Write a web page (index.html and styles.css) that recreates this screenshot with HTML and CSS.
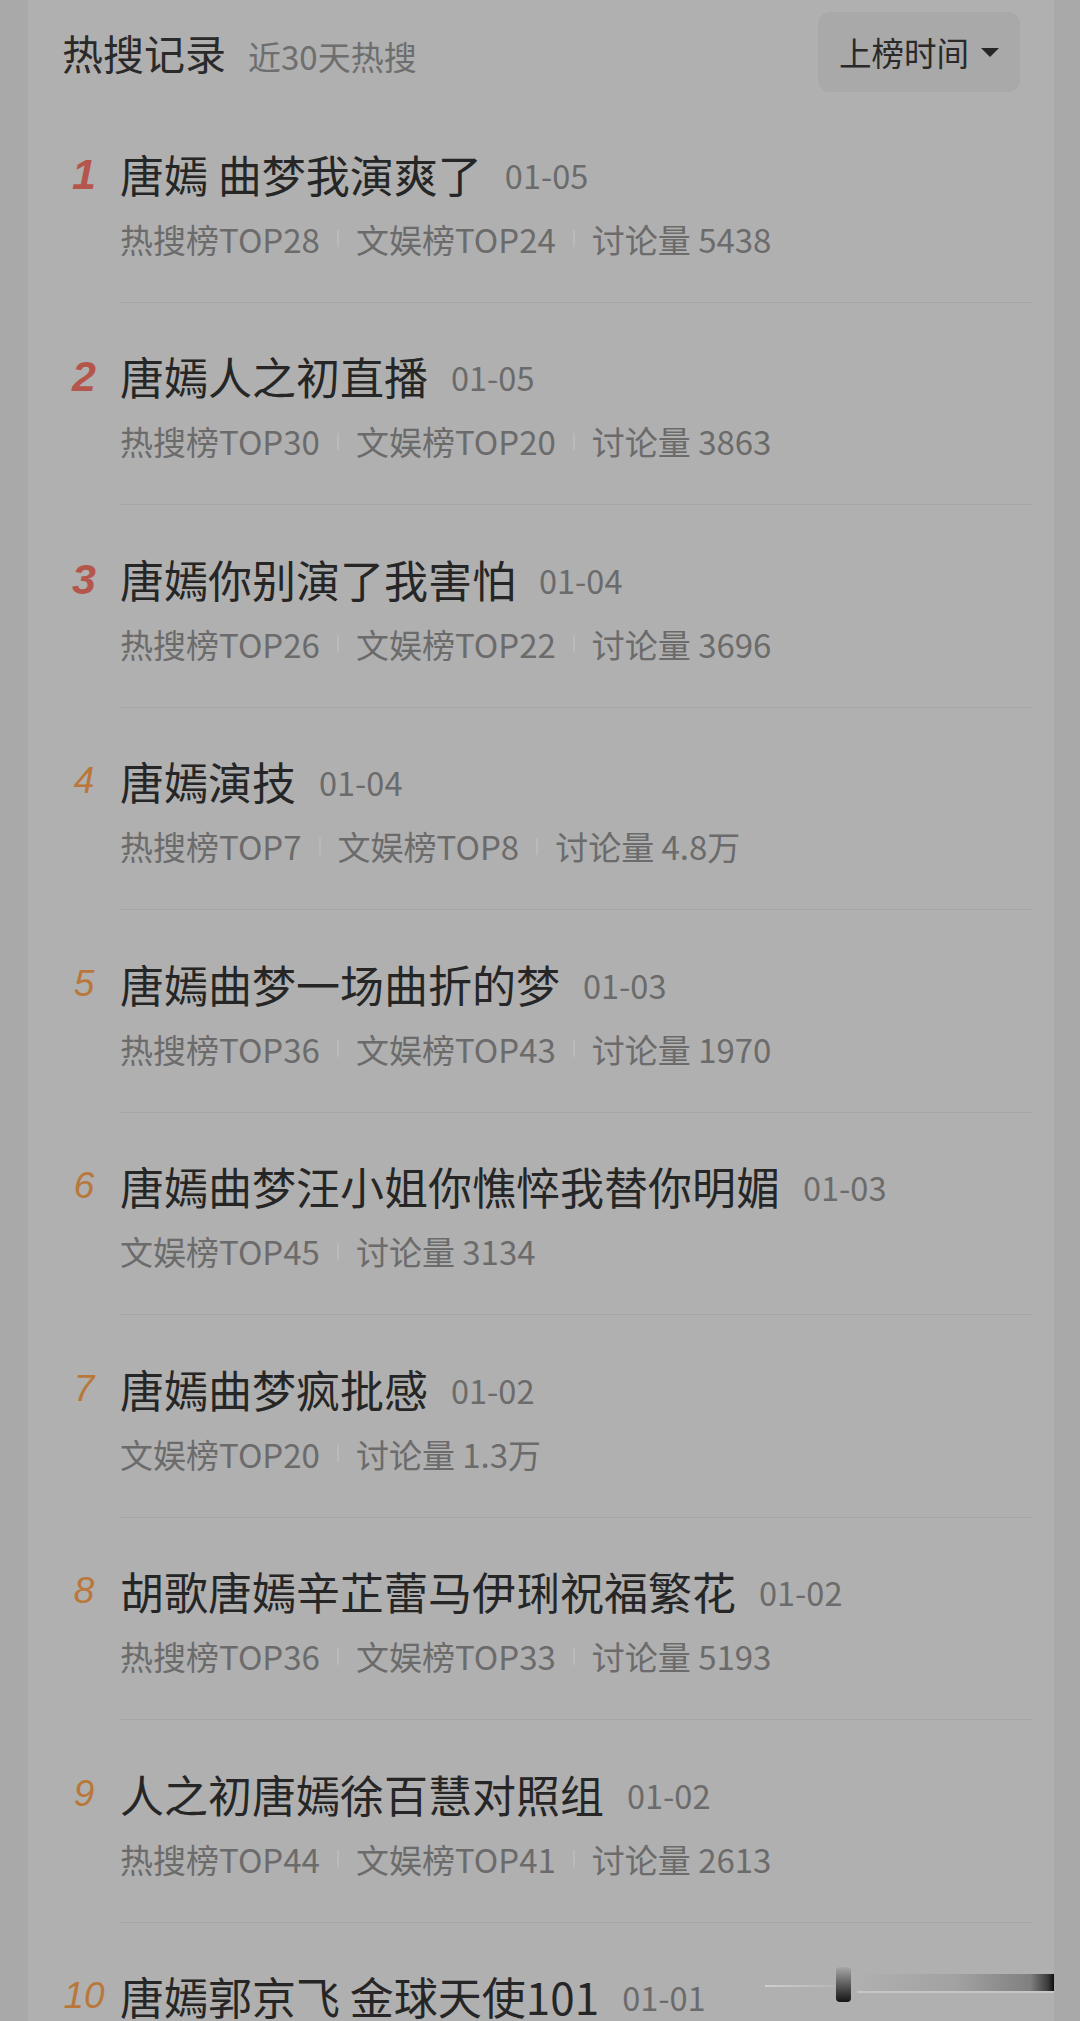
FILE: index.html
```html
<!DOCTYPE html>
<html lang="zh-CN">
<head>
<meta charset="utf-8">
<title>热搜记录</title>
<link rel="stylesheet" href="styles.css">
</head>
<body>
<div class="panel">
  <header class="head">
    <div class="head-left">
      <span class="head-title">热搜记录</span>
      <span class="head-sub">近30天热搜</span>
    </div>
    <button class="sort-btn">上榜时间<span class="caret"></span></button>
  </header>
  <ul class="list">
    <li class="item">
      <span class="rank top">1</span>
      <div class="body">
        <div class="title-line"><span class="title">唐嫣 曲梦我演爽了</span><span class="date">01-05</span></div>
        <div class="meta"><span>热搜榜TOP28</span><i class="sep"></i><span>文娱榜TOP24</span><i class="sep"></i><span>讨论量 5438</span></div>
      </div>
    </li>
    <li class="item">
      <span class="rank top">2</span>
      <div class="body">
        <div class="title-line"><span class="title">唐嫣人之初直播</span><span class="date">01-05</span></div>
        <div class="meta"><span>热搜榜TOP30</span><i class="sep"></i><span>文娱榜TOP20</span><i class="sep"></i><span>讨论量 3863</span></div>
      </div>
    </li>
    <li class="item">
      <span class="rank top">3</span>
      <div class="body">
        <div class="title-line"><span class="title">唐嫣你别演了我害怕</span><span class="date">01-04</span></div>
        <div class="meta"><span>热搜榜TOP26</span><i class="sep"></i><span>文娱榜TOP22</span><i class="sep"></i><span>讨论量 3696</span></div>
      </div>
    </li>
    <li class="item">
      <span class="rank">4</span>
      <div class="body">
        <div class="title-line"><span class="title">唐嫣演技</span><span class="date">01-04</span></div>
        <div class="meta"><span>热搜榜TOP7</span><i class="sep"></i><span>文娱榜TOP8</span><i class="sep"></i><span>讨论量 4.8万</span></div>
      </div>
    </li>
    <li class="item">
      <span class="rank">5</span>
      <div class="body">
        <div class="title-line"><span class="title">唐嫣曲梦一场曲折的梦</span><span class="date">01-03</span></div>
        <div class="meta"><span>热搜榜TOP36</span><i class="sep"></i><span>文娱榜TOP43</span><i class="sep"></i><span>讨论量 1970</span></div>
      </div>
    </li>
    <li class="item">
      <span class="rank">6</span>
      <div class="body">
        <div class="title-line"><span class="title">唐嫣曲梦汪小姐你憔悴我替你明媚</span><span class="date">01-03</span></div>
        <div class="meta"><span>文娱榜TOP45</span><i class="sep"></i><span>讨论量 3134</span></div>
      </div>
    </li>
    <li class="item">
      <span class="rank">7</span>
      <div class="body">
        <div class="title-line"><span class="title">唐嫣曲梦疯批感</span><span class="date">01-02</span></div>
        <div class="meta"><span>文娱榜TOP20</span><i class="sep"></i><span>讨论量 1.3万</span></div>
      </div>
    </li>
    <li class="item">
      <span class="rank">8</span>
      <div class="body">
        <div class="title-line"><span class="title">胡歌唐嫣辛芷蕾马伊琍祝福繁花</span><span class="date">01-02</span></div>
        <div class="meta"><span>热搜榜TOP36</span><i class="sep"></i><span>文娱榜TOP33</span><i class="sep"></i><span>讨论量 5193</span></div>
      </div>
    </li>
    <li class="item">
      <span class="rank">9</span>
      <div class="body">
        <div class="title-line"><span class="title">人之初唐嫣徐百慧对照组</span><span class="date">01-02</span></div>
        <div class="meta"><span>热搜榜TOP44</span><i class="sep"></i><span>文娱榜TOP41</span><i class="sep"></i><span>讨论量 2613</span></div>
      </div>
    </li>
    <li class="item last">
      <span class="rank">10</span>
      <div class="body">
        <div class="title-line"><span class="title">唐嫣郭京飞 金球天使101</span><span class="date">01-01</span></div>
      </div>
    </li>
  </ul>
</div>
<div class="mark"><span class="mark-line"></span><span class="mark-knob"></span><span class="mark-bar"></span></div>
</body>
</html>
```
FILE: styles.css
```css
html, body {
  margin: 0;
  padding: 0;
  height: 2021px;
  overflow: hidden;
}
body {
  background: #a9a9a9;
  font-family: "Noto Sans CJK SC", "Noto Sans", sans-serif;
  color: #2a2a2a;
  position: relative;
}
.panel {
  margin: 0 26px 0 28px;
  background: #b0b0b0;
  height: 2021px;
}
.head {
  height: 97px;
  padding: 3px 34px 0 34px;
  display: flex;
  align-items: center;
  justify-content: space-between;
}
.head-left {
  display: flex;
  align-items: baseline;
}
.head-title {
  font-size: 41px;
  color: #2a2a2a;
}
.head-sub {
  font-size: 33px;
  color: #6e6e6e;
  margin-left: 22px;
}
.sort-btn {
  font-family: inherit;
  border: none;
  background: #a9a9a9;
  border-radius: 12px;
  height: 80px;
  width: 202px;
  padding: 0 0 0 21px;
  display: flex;
  align-items: center;
  font-size: 32.5px;
  color: #2a2a2a;
}
.caret {
  width: 0;
  height: 0;
  border-left: 9px solid transparent;
  border-right: 9px solid transparent;
  border-top: 9px solid #262626;
  margin-left: 12px;
  margin-top: 2px;
}
.list {
  list-style: none;
  margin: 0;
  padding: 0;
}
.item {
  display: flex;
  padding: 0 22px 0 34px;
}
.rank {
  width: 44px;
  flex: none;
  text-align: center;
  padding-top: 45.5px;
  height: 56px;
  line-height: 56px;
  font-family: "Liberation Sans", "DejaVu Sans", sans-serif;
  font-style: italic;
  font-size: 37px;
  color: #b9783a;
}
.rank.top {
  font-weight: bold;
  font-size: 43px;
  color: #b4564b;
}
.body {
  flex: 1;
  margin-left: 14px;
  padding: 45.5px 0 41px;
  border-bottom: 1px solid #a6a6a6;
}
.title-line {
  height: 56px;
  display: flex;
  align-items: center;
  line-height: 56px;
  white-space: nowrap;
}
.title {
  font-size: 44px;
  color: #262626;
}
.date {
  font-size: 32.5px;
  color: #6b6b6b;
  margin-left: 23px;
  padding-top: 2px;
}
.meta {
  margin-top: 15px;
  height: 44px;
  line-height: 44px;
  display: flex;
  align-items: center;
  font-size: 33px;
  color: #6b6b6b;
  white-space: nowrap;
}
.sep {
  display: inline-block;
  width: 2px;
  height: 17px;
  background: #bababa;
  margin: 0 17px;
}
.mark {
  position: absolute;
  left: 765px;
  top: 1965px;
  width: 289px;
  height: 37px;
}
.mark-line {
  position: absolute;
  left: 0;
  top: 20px;
  width: 70px;
  height: 2px;
  background: linear-gradient(to right, #cfcfcf, rgba(190,190,190,0.4));
}
.mark-knob {
  position: absolute;
  left: 71px;
  top: 2px;
  width: 15px;
  height: 35px;
  border-radius: 4px;
  background: linear-gradient(to bottom, #a8a8a8, #555 55%, #151515);
}
.mark-bar {
  position: absolute;
  left: 92px;
  top: 9px;
  width: 197px;
  height: 17px;
  background: linear-gradient(to right, #b0b0b0, #a2a2a2 50%, #808080 88%, #3a3a3a 97%, #0e0e0e 100%);
  border-bottom: 2px solid #c6c6c6;
}
```
